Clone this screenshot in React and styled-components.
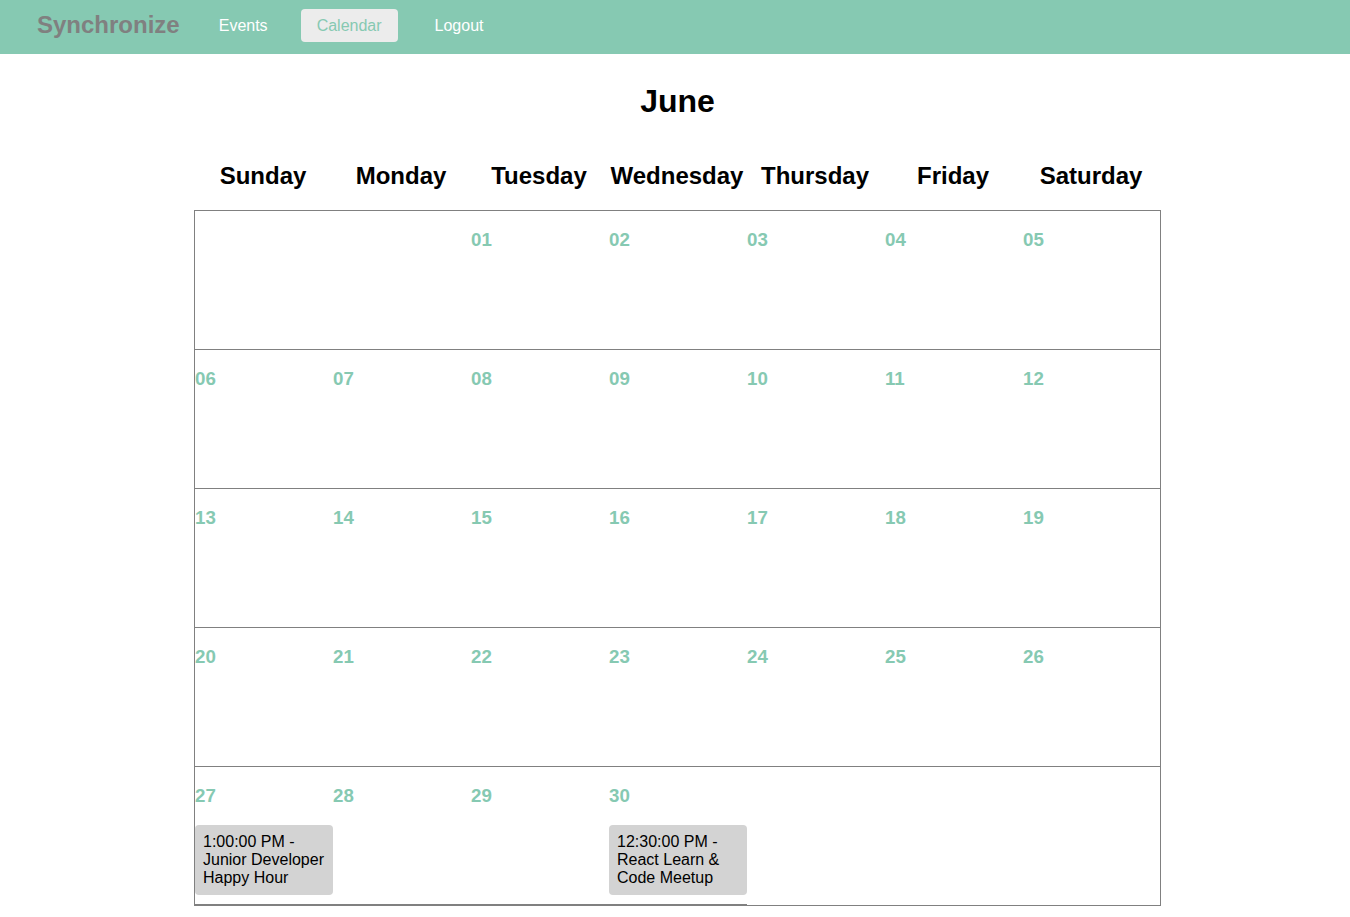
import React from 'react';
import styled, { createGlobalStyle } from 'styled-components';

const GlobalStyle = createGlobalStyle`
  body {
    margin: 0;
    font-family: "Liberation Sans", Arial, sans-serif;
    background: #fff;
  }
`;

const Navbar = styled.nav`
  height: 54px;
  background-color: #86c9b2;
  display: flex;
  align-items: center;
  padding: 0 37px 4px;
  box-sizing: border-box;
`;

const Brand = styled.div`
  font-size: 24px;
  font-weight: bold;
  color: #808080;
  margin-right: 23px;
`;

const NavLink = styled.a`
  font-size: 16px;
  color: ${(p) => (p.active ? '#86c9b2' : '#fff')};
  background-color: ${(p) => (p.active ? '#ececec' : 'transparent')};
  border-radius: 4px;
  padding: 8px 16px;
  margin-right: ${(p) => (p.active ? '21px' : '17px')};
  line-height: 17px;
  cursor: pointer;
`;

const Main = styled.main`
  width: 967px;
  margin-left: calc(50% - 481px);
`;

const Month = styled.h1`
  font-size: 32px;
  font-weight: bold;
  text-align: center;
  margin: 29px 0 0;
  line-height: 37px;
`;

const DayHeader = styled.div`
  display: grid;
  grid-template-columns: repeat(7, 138px);
  margin-top: 42px;
  margin-bottom: 20px;
`;

const DayName = styled.div`
  font-size: 24px;
  font-weight: bold;
  text-align: center;
  line-height: 28px;
`;

const Grid = styled.div`
  border: 1px solid #808080;
`;

const Week = styled.div`
  display: grid;
  grid-template-columns: repeat(7, 138px);
  height: 138px;
  border-bottom: ${(p) => (p.last ? 'none' : '1px solid #808080')};
`;

const Cell = styled.div`
  border-bottom: ${(p) => (p.underline ? '1px solid #808080' : 'none')};
`;

const DateNum = styled.h3`
  font-size: 18.72px;
  font-weight: bold;
  color: #86c9b2;
  margin: 18px 0 19px;
  line-height: 21px;
`;

const Event = styled.div`
  background-color: #d3d3d3;
  border-radius: 4px;
  padding: 8px;
  font-size: 16px;
  line-height: 18px;
  color: #000;
`;

const days = ['Sunday', 'Monday', 'Tuesday', 'Wednesday', 'Thursday', 'Friday', 'Saturday'];

const events = {
  27: '1:00:00 PM - Junior Developer Happy Hour',
  30: '12:30:00 PM - React Learn & Code Meetup',
};

const pad = (n) => String(n).padStart(2, '0');

const App = () => {
  // June starts on a Tuesday
  const cells = [null, null];
  for (let d = 1; d <= 30; d++) cells.push(d);
  while (cells.length % 7) cells.push(null);
  const weeks = [];
  for (let i = 0; i < cells.length; i += 7) weeks.push(cells.slice(i, i + 7));

  return (
    <>
      <GlobalStyle />
      <Navbar>
        <Brand>Synchronize</Brand>
        <NavLink>Events</NavLink>
        <NavLink active>Calendar</NavLink>
        <NavLink>Logout</NavLink>
      </Navbar>
      <Main>
        <Month>June</Month>
        <DayHeader>
          {days.map((d) => (
            <DayName key={d}>{d}</DayName>
          ))}
        </DayHeader>
        <Grid>
          {weeks.map((week, wi) => (
            <Week key={wi} last={wi === weeks.length - 1}>
              {week.map((d, di) => (
                <Cell key={di} underline={wi === weeks.length - 1 && d !== null}>
                  {d !== null && <DateNum>{pad(d)}</DateNum>}
                  {events[d] && <Event>{events[d]}</Event>}
                </Cell>
              ))}
            </Week>
          ))}
        </Grid>
      </Main>
    </>
  );
};

export default App;
